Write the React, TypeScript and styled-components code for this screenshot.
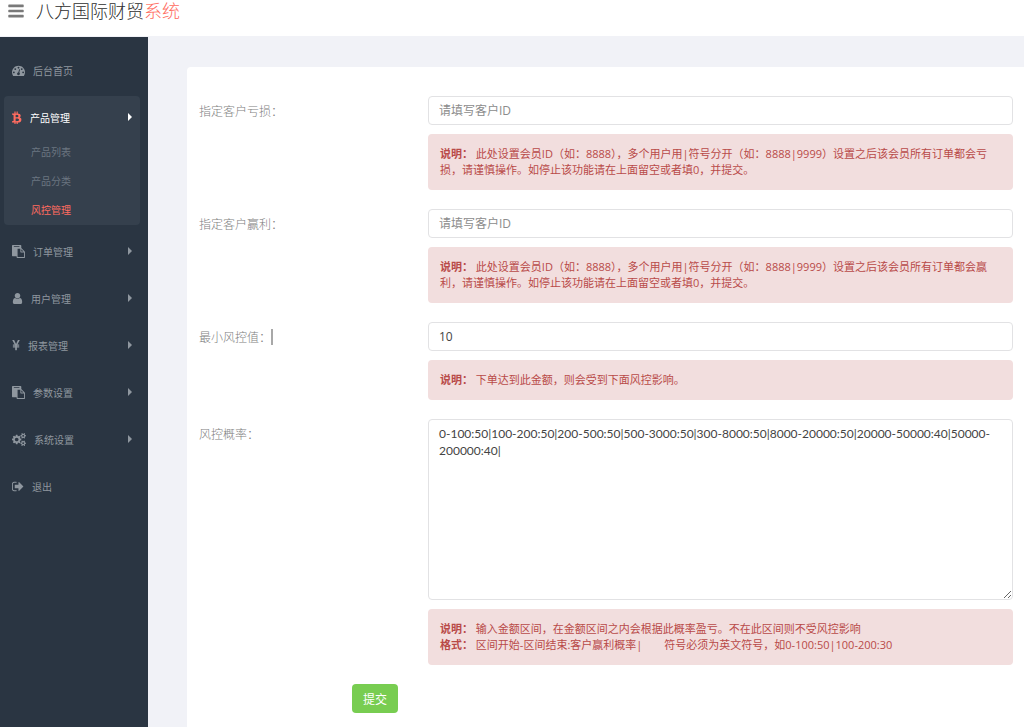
import React from "react";
import styled, { createGlobalStyle } from "styled-components";

const GlobalStyle = createGlobalStyle`
  *, *::before, *::after { box-sizing: border-box; }
  body {
    margin: 0;
    background: #f1f2f7;
    color: #797979;
    font-family: "Open Sans", "Noto Sans CJK SC", sans-serif;
    font-size: 12px;
  }
  ul { list-style: none; margin: 0; padding: 0; }
`;

const Page = styled.div`
  display: flex;
  flex-direction: column;
  min-height: 100vh;
`;

const Header = styled.header`
  display: flex;
  align-items: flex-start;
  gap: 12px;
  height: 37px;
  padding-left: 8px;
  background: #fff;
  border-bottom: 1px solid #f1f2f7;
`;

const MenuButton = styled.button`
  display: flex;
  padding: 2px 0 0;
  border: 0;
  background: none;
  color: #797979;
`;

const Brand = styled.a`
  color: #2e2e2e;
  font-size: 18px;
  font-weight: 300;
  line-height: 22px;
  text-decoration: none;
  span { color: #ff6c60; }
`;

const Body = styled.div`
  display: flex;
  flex: 1;
`;

const Sidebar = styled.nav`
  flex: 0 0 148px;
  padding: 12px 8px 0 4px;
  background: #2a3542;
`;

const Menu = styled.ul`
  display: flex;
  flex-direction: column;
  gap: 5px;
`;

const MenuItem = styled.li<{ $open?: boolean }>`
  border-radius: 4px;
  background: ${(p) => (p.$open ? "#35404d" : "transparent")};
`;

const MenuLink = styled.a<{ $active?: boolean }>`
  display: flex;
  align-items: center;
  height: 42px;
  padding: 0 8px;
  color: ${(p) => (p.$active ? "#fff" : "#8f979f")};
  font-size: 10px;
  text-decoration: none;
  > svg:first-child {
    margin-right: 8px;
    color: ${(p) => (p.$active ? "#ff6c60" : "#8f979f")};
  }
`;

const Caret = styled.span`
  margin-left: auto;
  border: solid transparent;
  border-width: 4px 0 4px 4px;
  border-left-color: currentColor;
`;

const SubLink = styled.a<{ $active?: boolean }>`
  display: block;
  padding-left: 27px;
  color: ${(p) => (p.$active ? "#ff6c60" : "#6b7580")};
  font-size: 10px;
  line-height: 29px;
  text-decoration: none;
`;

const Main = styled.main`
  display: flex;
  flex: 1;
  min-width: 0;
  padding: 30px 0 0 39px;
`;

const Form = styled.form`
  display: flex;
  flex: 1;
  flex-direction: column;
  gap: 19px;
  min-width: 0;
  padding: 29px 11px 14px 12px;
  border-radius: 4px 0 0 0;
  background: #fff;
`;

const Row = styled.div`
  display: grid;
  grid-template-columns: 229px minmax(0, 1fr);
`;

const Label = styled.label`
  display: flex;
  align-items: center;
  height: 29px;
  color: #808080;
  font-weight: 300;
`;

const TextCursor = styled.span`
  width: 2px;
  height: 16px;
  background: #a8a8a8;
`;

const Fields = styled.div`
  display: flex;
  flex-direction: column;
  gap: 9px;
`;

const Input = styled.input`
  height: 29px;
  padding: 0 10px;
  border: 1px solid #e2e2e4;
  border-radius: 4px;
  background: #fff;
  color: #444;
  font: inherit;
  &::placeholder { color: #8c8c8c; }
`;

const TextArea = styled.textarea`
  display: block;
  height: 181px;
  padding: 5px 10px;
  border: 1px solid #e2e2e4;
  border-radius: 4px;
  color: #444;
  font-family: Lato, "Noto Sans CJK SC", sans-serif;
  font-size: 12px;
  line-height: 17px;
  resize: both;
`;

const Alert = styled.div`
  padding: 12px;
  border-radius: 4px;
  background: #f2dede;
  color: #b94a48;
  font-size: 11px;
  line-height: 16px;
`;

const AlertLine = styled.p`
  margin: 0;
  white-space: pre-wrap;
`;

const Actions = styled.div`
  padding-left: 153px;
`;

const Submit = styled.button`
  height: 29px;
  padding: 0 11px;
  border: 0;
  border-radius: 4px;
  background: #78cd51;
  color: #fff;
  font: inherit;
`;

type IconName = "bars" | "dashboard" | "btc" | "paste" | "user" | "jpy" | "cogs" | "signOut";

const icons: Record<IconName, { x: number; w: number; d: string }> = {
  bars: {
    x: 128,
    w: 1536,
    d: "M1664 1344v128q0 26-19 45t-45 19h-1408q-26 0-45-19t-19-45v-128q0-26 19-45t45-19h1408q26 0 45 19t19 45zm0-512v128q0 26-19 45t-45 19h-1408q-26 0-45-19t-19-45v-128q0-26 19-45t45-19h1408q26 0 45 19t19 45zm0-512v128q0 26-19 45t-45 19h-1408q-26 0-45-19t-19-45v-128q0-26 19-45t45-19h1408q26 0 45 19t19 45z",
  },
  dashboard: {
    x: 0,
    w: 1792,
    d: "M384 1152q0-53-37.5-90.5t-90.5-37.5-90.5 37.5-37.5 90.5 37.5 90.5 90.5 37.5 90.5-37.5 37.5-90.5zm192-448q0-53-37.5-90.5t-90.5-37.5-90.5 37.5-37.5 90.5 37.5 90.5 90.5 37.5 90.5-37.5 37.5-90.5zm428 481l101-382q6-26-7.5-48.5t-38.5-29.5-48 6.5-30 39.5l-101 382q-60 5-107 43.5t-63 98.5q-20 77 20 146t117 89 146-20 89-117q16-60-6-117t-72-91zm660-33q0-53-37.5-90.5t-90.5-37.5-90.5 37.5-37.5 90.5 37.5 90.5 90.5 37.5 90.5-37.5 37.5-90.5zm-640-640q0-53-37.5-90.5t-90.5-37.5-90.5 37.5-37.5 90.5 37.5 90.5 90.5 37.5 90.5-37.5 37.5-90.5zm448 192q0-53-37.5-90.5t-90.5-37.5-90.5 37.5-37.5 90.5 37.5 90.5 90.5 37.5 90.5-37.5 37.5-90.5zm320 448q0 261-141 483-19 29-54 29h-1402q-35 0-54-29-141-221-141-483 0-182 71-348t191-286 286-191 348-71 348 71 286 191 191 286 71 348z",
  },
  btc: {
    x: 320,
    w: 1220,
    d: "M1399 710q18 182-131 258 117 28 175 103t45 214q-7 71-32.5 125t-64.5 89-97 58.5-121.5 34.5-145.5 15v255h-154v-251q-80 0-122-1v252h-154v-255q-18 0-54-.5t-55-.5h-200l31-183h111q50 0 58-51v-402h16q-6-1-16-1v-287q-13-68-89-68h-111v-164l212 1q64 0 97-1v-252h154v247q82-2 122-2v-245h154v252q79 7 140 22.5t113 45 82.5 78 36.5 114.5zm-215 545q0-36-15-64t-37-46-57.5-30.5-65.5-18.5-74-9-69-3-64.5 1-47.5 1v338q8 0 37 .5t48 .5 53-1.5 58.5-4 57-8.5 55.5-14 47.5-21 39.5-30 24.5-40 9.5-51zm-71-476q0-33-12.5-58.5t-30.5-42-48-28-55-16.5-61.5-8-58-2.5-54 1-39.5.5v307q5 0 34.5.5t46.5 0 50-2 55-5.5 51.5-11 48.5-18.5 37-27 27-38.5 9-51z",
  },
  paste: {
    x: 0,
    w: 1792,
    d: "M768 1664h896v-640h-416q-40 0-68-28t-28-68v-416h-384v1152zm256-1440v-64q0-13-9.5-22.5t-22.5-9.5h-704q-13 0-22.5 9.5t-9.5 22.5v64q0 13 9.5 22.5t22.5 9.5h704q13 0 22.5-9.5t9.5-22.5zm256 672h299l-299-299v299zm512 128v672q0 40-28 68t-68 28h-960q-40 0-68-28t-28-68v-160h-544q-40 0-68-28t-28-68v-1344q0-40 28-68t68-28h1088q40 0 68 28t28 68v328q21 13 36 28l408 408q28 28 48 76t20 88z",
  },
  user: {
    x: 200,
    w: 1392,
    d: "M1536 1399q0 109-62.5 187t-150.5 78h-854q-88 0-150.5-78t-62.5-187q0-85 8.5-160.5t31.5-152 58.5-131 94-89 134.5-34.5q131 128 313 128t313-128q76 0 134.5 34.5t94 89 58.5 131 31.5 152 8.5 160.5zm-256-887q0 159-112.5 271.5t-271.5 112.5-271.5-112.5-112.5-271.5 112.5-271.5 271.5-112.5 271.5 112.5 112.5 271.5z",
  },
  jpy: {
    x: 380,
    w: 1030,
    d: "M985.5 1536h-172q-13 0-22.5-9t-9.5-23v-330h-288q-13 0-22.5-9t-9.5-23v-103q0-13 9.5-22.5t22.5-9.5h288v-85h-288q-13 0-22.5-9t-9.5-23v-104q0-13 9.5-22.5t22.5-9.5h214l-321-578q-8-16 0-32 10-16 28-16h194q19 0 29 18l215 425q19 38 56 125 10-24 30.5-68t27.5-61l191-420q8-19 29-19h191q17 0 27 16 9 14 1 31l-313 579h215q13 0 22.5 9.5t9.5 22.5v104q0 14-9.5 23t-22.5 9h-290v85h290q13 0 22.5 9.5t9.5 22.5v103q0 14-9.5 23t-22.5 9h-290v330q0 13-9.5 22.5t-22.5 9.5z",
  },
  cogs: {
    x: -64,
    w: 1920,
    d: "M832 896q0-106-75-181t-181-75-181 75-75 181 75 181 181 75 181-75 75-181zm768 512q0-52-38-90t-90-38-90 38-38 90q0 53 37.5 90.5t90.5 37.5 90.5-37.5 37.5-90.5zm0-1024q0-52-38-90t-90-38-90 38-38 90q0 53 37.5 90.5t90.5 37.5 90.5-37.5 37.5-90.5zm-384 421v185q0 10-7 19.5t-16 10.5l-155 24q-11 35-32 76 34 48 90 115 7 11 7 20 0 12-7 19-23 30-82.5 89.5t-78.5 59.5q-11 0-21-7l-115-90q-37 19-77 31-11 108-23 155-7 24-30 24h-186q-11 0-20-7.5t-10-17.5l-23-153q-34-10-75-31l-118 89q-7 7-20 7-11 0-21-8-144-133-144-160 0-9 7-19 10-14 41-53t47-61q-23-44-35-82l-152-24q-10-1-17-9.5t-7-19.5v-185q0-10 7-19.5t16-10.5l155-24q11-35 32-76-34-48-90-115-7-11-7-20 0-12 7-20 22-30 82-89t79-59q11 0 21 7l115 90q34-18 77-32 11-108 23-154 7-24 30-24h186q11 0 20 7.5t10 17.5l23 153q34 10 75 31l118-89q8-7 20-7 11 0 21 8 144 133 144 160 0 8-7 19-12 16-42 54t-45 60q23 48 34 82l152 23q10 2 17 10.5t7 19.5zm640 533v140q0 16-149 31-12 27-30 52 51 113 51 138 0 4-4 7-122 71-124 71-8 0-46-47t-52-68q-20 2-30 2t-30-2q-14 21-52 68t-46 47q-2 0-124-71-4-3-4-7 0-25 51-138-18-25-30-52-149-15-149-31v-140q0-16 149-31 13-29 30-52-51-113-51-138 0-4 4-7 4-2 35-20t59-34 30-16q8 0 46 46.5t52 67.5q20-2 30-2t30 2q51-71 92-112l6-2q4 0 124 70 4 3 4 7 0 25-51 138 17 23 30 52 149 15 149 31zm0-1024v140q0 16-149 31-12 27-30 52 51 113 51 138 0 4-4 7-122 71-124 71-8 0-46-47t-52-68q-20 2-30 2t-30-2q-14 21-52 68t-46 47q-2 0-124-71-4-3-4-7 0-25 51-138-18-25-30-52-149-15-149-31v-140q0-16 149-31 13-29 30-52-51-113-51-138 0-4 4-7 4-2 35-20t59-34 30-16q8 0 46 46.5t52 67.5q20-2 30-2t30 2q51-71 92-112l6-2q4 0 124 70 4 3 4 7 0 25-51 138 17 23 30 52 149 15 149 31z",
  },
  signOut: {
    x: 96,
    w: 1600,
    d: "M704 1440q0 4 1 20t.5 26.5-3 23.5-10 19.5-20.5 6.5h-320q-119 0-203.5-84.5t-84.5-203.5v-704q0-119 84.5-203.5t203.5-84.5h320q13 0 22.5 9.5t9.5 22.5q0 4 1 20t.5 26.5-3 23.5-10 19.5-20.5 6.5h-320q-66 0-113 47t-47 113v704q0 66 47 113t113 47h312l11.5 1 11.5 3 8 5.5 7 9 2 13.5zm928-544q0 26-19 45l-544 544q-19 19-45 19t-45-19-19-45v-288h-448q-26 0-45-19t-19-45v-384q0-26 19-45t45-19h448v-288q0-26 19-45t45-19 45 19l544 544q19 19 19 45z",
  },
};

function Icon({ name, size = 13 }: { name: IconName; size?: number }) {
  const { x, w, d } = icons[name];
  return (
    <svg
      width={Math.ceil((w * size) / 1792)}
      height={size}
      viewBox={`${x} 0 ${w} 1792`}
      fill="currentColor"
      aria-hidden="true"
    >
      <path d={d} />
    </svg>
  );
}

type Entry = { icon: IconName; text: string; leaf?: boolean; children?: string[] };

const menu: Entry[] = [
  { icon: "dashboard", text: "后台首页", leaf: true },
  { icon: "btc", text: "产品管理", children: ["产品列表", "产品分类", "风控管理"] },
  { icon: "paste", text: "订单管理" },
  { icon: "user", text: "用户管理" },
  { icon: "jpy", text: "报表管理" },
  { icon: "paste", text: "参数设置" },
  { icon: "cogs", text: "系统设置" },
  { icon: "signOut", text: "退出", leaf: true },
];

const currentPage = "风控管理";

export default function App() {
  return (
    <>
      <GlobalStyle />
      <Page>
        <Header>
          <MenuButton type="button" aria-label="菜单">
            <Icon name="bars" size={18} />
          </MenuButton>
          <Brand href="#">
            八方国际财贸<span>系统</span>
          </Brand>
        </Header>
        <Body>
          <Sidebar>
            <Menu>
              {menu.map((item) => (
                <MenuItem key={item.text} $open={!!item.children}>
                  <MenuLink href="#" $active={!!item.children}>
                    <Icon name={item.icon} size={item.children ? 14 : 13} />
                    {item.text}
                    {!item.leaf && <Caret />}
                  </MenuLink>
                  {item.children && (
                    <ul>
                      {item.children.map((child) => (
                        <li key={child}>
                          <SubLink href="#" $active={child === currentPage}>
                            {child}
                          </SubLink>
                        </li>
                      ))}
                    </ul>
                  )}
                </MenuItem>
              ))}
            </Menu>
          </Sidebar>
          <Main>
            <Form onSubmit={(e) => e.preventDefault()}>
              <Row>
                <Label htmlFor="loss">指定客户亏损：</Label>
                <Fields>
                  <Input id="loss" type="text" placeholder="请填写客户ID" />
                  <Alert>
                    <AlertLine>
                      <strong>说明：</strong> 此处设置会员ID（如：8888），多个用户用|符号分开（如：8888|9999）设置之后该会员所有订单都会亏损，请谨慎操作。如停止该功能请在上面留空或者填0，并提交。
                    </AlertLine>
                  </Alert>
                </Fields>
              </Row>
              <Row>
                <Label htmlFor="win">指定客户赢利：</Label>
                <Fields>
                  <Input id="win" type="text" placeholder="请填写客户ID" />
                  <Alert>
                    <AlertLine>
                      <strong>说明：</strong> 此处设置会员ID（如：8888），多个用户用|符号分开（如：8888|9999）设置之后该会员所有订单都会赢利，请谨慎操作。如停止该功能请在上面留空或者填0，并提交。
                    </AlertLine>
                  </Alert>
                </Fields>
              </Row>
              <Row>
                <Label htmlFor="min">
                  最小风控值：
                  <TextCursor />
                </Label>
                <Fields>
                  <Input id="min" type="text" defaultValue="10" />
                  <Alert>
                    <AlertLine>
                      <strong>说明：</strong> 下单达到此金额，则会受到下面风控影响。
                    </AlertLine>
                  </Alert>
                </Fields>
              </Row>
              <Row>
                <Label htmlFor="rate">风控概率：</Label>
                <Fields>
                  <TextArea
                    id="rate"
                    defaultValue="0-100:50|100-200:50|200-500:50|500-3000:50|300-8000:50|8000-20000:50|20000-50000:40|50000-200000:40|"
                  />
                  <Alert>
                    <AlertLine>
                      <strong>说明：</strong> 输入金额区间，在金额区间之内会根据此概率盈亏。不在此区间则不受风控影响
                    </AlertLine>
                    <AlertLine>
                      <strong>格式：</strong> 区间开始-区间结束:客户赢利概率|{"\u3000\u3000"}符号必须为英文符号，如0-100:50|100-200:30
                    </AlertLine>
                  </Alert>
                </Fields>
              </Row>
              <Actions>
                <Submit type="submit">提交</Submit>
              </Actions>
            </Form>
          </Main>
        </Body>
      </Page>
    </>
  );
}
